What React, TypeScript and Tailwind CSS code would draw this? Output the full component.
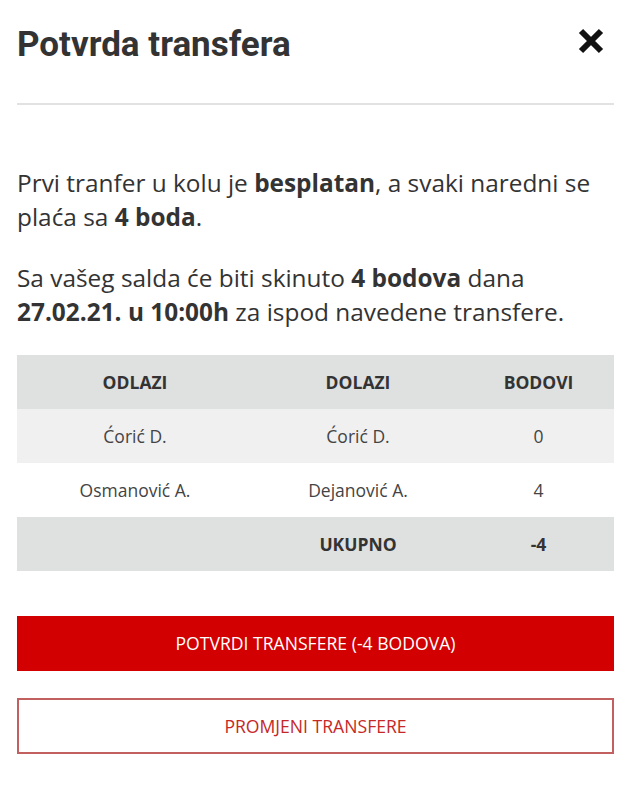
import React from "react";

const rows = [
  { out: "Ćorić D.", inn: "Ćorić D.", pts: "0", bg: "bg-[#f0f0f0]" },
  { out: "Osmanović A.", inn: "Dejanović A.", pts: "4", bg: "bg-white" },
];

export default function App() {
  return (
    <div className="w-[632px] min-h-[800px] bg-white pl-[17px] pr-[18px] text-[#333] font-['Open_Sans',sans-serif]">
      <div className="flex items-start justify-between pt-[25px]">
        <h1 className="font-['Roboto',sans-serif] font-bold text-[35px] leading-[40px] text-[#333]">
          Potvrda transfera
        </h1>
        <button className="mt-[3px] mr-[10px]" aria-label="close">
          <svg width="26" height="26" viewBox="0 0 26 26">
            <path d="M3 3 L23 23 M23 3 L3 23" stroke="#111" strokeWidth="6" strokeLinecap="butt" />
          </svg>
        </button>
      </div>
      <div className="mt-[38px] h-[2px] bg-[#e2e2e2]" />
      <div className="mt-[61px] text-[24.4px] leading-[34px] text-[#333]">
        <p>
          Prvi tranfer u kolu je <b className="font-bold">besplatan</b>, a svaki naredni se plaća sa{" "}
          <b className="font-bold">4 boda</b>.
        </p>
        <p className="mt-[27px]">
          Sa vašeg salda će biti skinuto <b className="font-bold">4 bodova</b> dana{" "}
          <b className="font-bold">27.02.21. u 10:00h</b> za ispod navedene transfere.
        </p>
      </div>
      <table className="mt-[26px] w-full border-collapse text-[17.5px] text-center">
        <thead>
          <tr className="bg-[#dfe0e0] h-[54px]">
            <th className="w-[236px] font-bold text-[#333]">ODLAZI</th>
            <th className="w-[210px] font-bold text-[#333]">DOLAZI</th>
            <th className="font-bold text-[#333]">BODOVI</th>
          </tr>
        </thead>
        <tbody>
          {rows.map((r, i) => (
            <tr key={i} className={`${r.bg} h-[54px] text-[#444]`}>
              <td>{r.out}</td>
              <td>{r.inn}</td>
              <td>{r.pts}</td>
            </tr>
          ))}
          <tr className="bg-[#dfe0e0] h-[54px]">
            <td></td>
            <td className="font-bold text-[#333]">UKUPNO</td>
            <td className="font-bold text-[#333]">-4</td>
          </tr>
        </tbody>
      </table>
      <div className="mt-[45px] flex flex-col gap-[27px]">
        <button className="h-[55px] w-full bg-[#d20000] text-white text-[17.6px] uppercase">
          POTVRDI TRANSFERE (-4 BODOVA)
        </button>
        <button className="h-[56px] w-full bg-white border-2 border-[#c2605f] text-[#c62828] text-[17.6px] uppercase">
          PROMJENI TRANSFERE
        </button>
      </div>
    </div>
  );
}
